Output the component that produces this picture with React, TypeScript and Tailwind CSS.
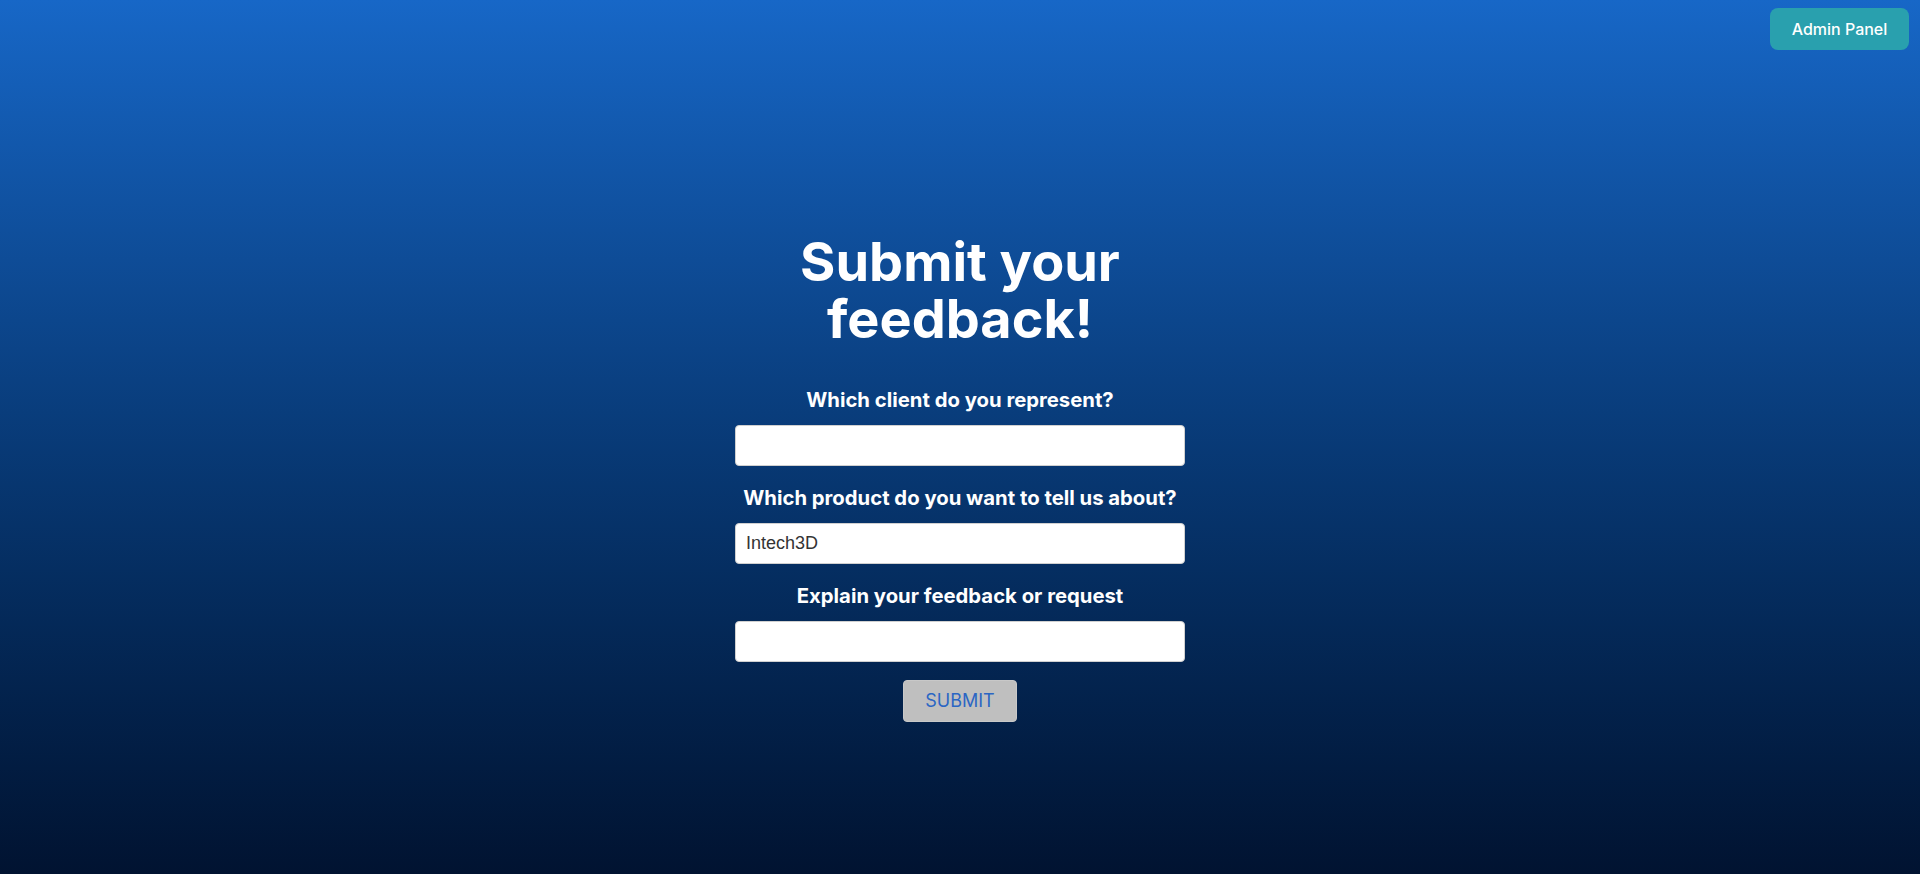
import React, { useState } from "react";

const App = () => {
  const [client, setClient] = useState("");
  const [product, setProduct] = useState("Intech3D");
  const [feedback, setFeedback] = useState("");

  return (
    <div className="flex min-h-screen flex-col bg-linear-to-b from-[#1767c7] to-[#011331] font-['Inter',sans-serif] text-white">
      <div className="flex justify-end pr-[11px] pt-2">
        <button className="h-[42px] w-[139px] rounded-lg bg-[#29a0ae] text-base font-medium text-white">
          Admin Panel
        </button>
      </div>

      <div className="flex flex-col items-center pt-[183px]">
        <h1 className="mb-[39px] w-[450px] text-center text-[54px] font-bold leading-[57px]">
          Submit your feedback!
        </h1>

        <form
          className="flex w-[450px] flex-col items-center"
          onSubmit={(e) => e.preventDefault()}
        >
          <label className="mb-[11px] text-[20.3px] font-bold leading-7">
            Which client do you represent?
          </label>
          <input
            type="text"
            value={client}
            onChange={(e) => setClient(e.target.value)}
            className="h-[41px] w-full rounded-[4px] border border-[#d0d0d0] bg-white px-[10px] font-['Liberation_Sans',Arial,sans-serif] text-lg text-[#333] outline-none"
          />

          <label className="mb-[11px] mt-[18px] text-[20.3px] font-bold leading-7">
            Which product do you want to tell us about?
          </label>
          <input
            type="text"
            value={product}
            onChange={(e) => setProduct(e.target.value)}
            className="h-[41px] w-full rounded-[4px] border border-[#d0d0d0] bg-white px-[10px] font-['Liberation_Sans',Arial,sans-serif] text-lg text-[#333] outline-none"
          />

          <label className="mb-[11px] mt-[18px] text-[20.3px] font-bold leading-7">
            Explain your feedback or request
          </label>
          <input
            type="text"
            value={feedback}
            onChange={(e) => setFeedback(e.target.value)}
            className="h-[41px] w-full rounded-[4px] border border-[#d0d0d0] bg-white px-[10px] font-['Liberation_Sans',Arial,sans-serif] text-lg text-[#333] outline-none"
          />

          <button
            type="submit"
            className="mt-[18px] flex h-[42px] w-[114px] items-center justify-center rounded-[4px] border border-[#c8c8c8] bg-[#bfbfbf] text-lg text-[#2b66c4]"
          >
            SUBMIT
          </button>
        </form>
      </div>
    </div>
  );
};

export default App;
